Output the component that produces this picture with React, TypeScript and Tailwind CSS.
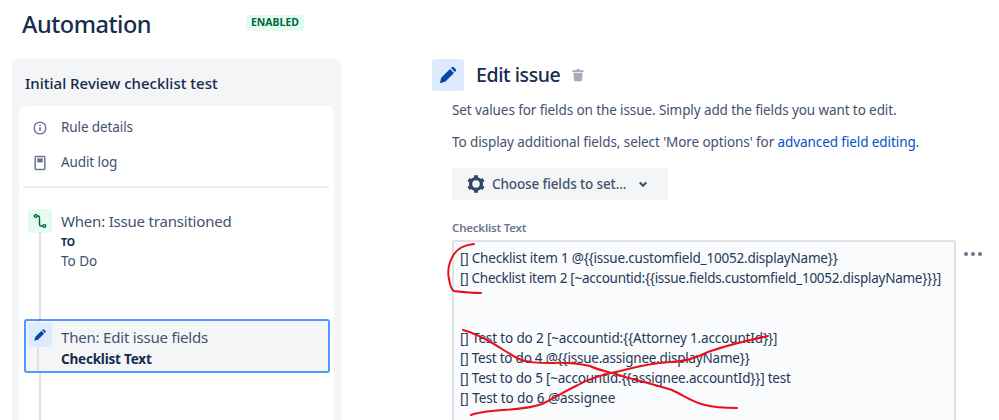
const font = "font-['Noto_Sans','Open_Sans',sans-serif]";

function Pencil({ className }: { className: string }) {
  return (
    <svg viewBox="0 0 24 24" className={className} fill="currentColor">
      <path d="M2.2 21.8l1.6-6.4L14.4 4.8l4.8 4.8L8.6 20.2z" />
      <path d="M15.6 3.6l.9-.9a1.8 1.8 0 0 1 2.5 0l2.3 2.3a1.8 1.8 0 0 1 0 2.5l-.9.9z" />
    </svg>
  );
}

const lines = [
  { text: "[] Checklist item 1 @{{issue.customfield_10052.displayName}}", cls: "tracking-[-0.2px]" },
  { text: "[] Checklist item 2 [~accountid:{{issue.fields.customfield_10052.displayName}}}]", cls: "tracking-[-0.27px]" },
  { text: "\u00a0", cls: "" },
  { text: "\u00a0", cls: "" },
  { text: "[] Test to do 2 [~accountid:{{Attorney 1.accountId}}]", cls: "tracking-[-0.14px]" },
  { text: "[] Test to do 4 @{{issue.assignee.displayName}}", cls: "tracking-[-0.22px]" },
  { text: "[] Test to do 5 [~accountid:{{assignee.accountId}}] test", cls: "tracking-[-0.2px]" },
  { text: "[] Test to do 6 @assignee", cls: "tracking-[-0.08px]" },
];

export default function App() {
  return (
    <div className={`relative h-[420px] w-[999px] overflow-hidden bg-white text-[#253858] ${font}`}>
      <div className="flex h-full">
        <div className="flex w-[420px] shrink-0 flex-col pl-3">
          <div className="flex h-[59px] shrink-0 items-start">
            <h1 className="ml-[10px] mt-[7px] w-[224px] text-[23.5px] leading-[34px] font-medium tracking-[-0.45px] text-[#172b4d]">Automation</h1>
            <span className="mt-[15px] flex h-4 w-[58px] items-center justify-center rounded-[3px] bg-[#e3fcef] text-[10.5px] font-bold text-[#006644]">ENABLED</span>
          </div>
          <div className="flex min-h-0 w-[329px] flex-1 flex-col rounded-t-md bg-[#f4f5f7] px-[7px]">
            <div className="flex h-[47px] shrink-0 items-center pl-[6px] pt-[1px] text-[15px] font-medium text-[#172b4d]">Initial Review checklist test</div>
            <div className="flex min-h-0 flex-1 flex-col rounded-t-md bg-white px-1">
              <div className="mt-[4px] flex h-[35px] items-center gap-[14px] pl-[10px] text-[13.5px] tracking-[-0.1px] text-[#42526e]">
                <svg viewBox="0 0 16 16" className="h-[14px] w-[14px] text-[#6b778c]" fill="none" stroke="currentColor" strokeWidth="1.6">
                  <circle cx="8" cy="8" r="6.7" />
                  <path d="M8 7.2v4" strokeWidth="2" />
                  <circle cx="8" cy="4.9" r="1" fill="currentColor" stroke="none" />
                </svg>
                <span>Rule details</span>
              </div>
              <div className="flex h-[35px] items-center gap-[14px] pl-[10px] text-[13.5px] tracking-[-0.1px] text-[#42526e]">
                <svg viewBox="0 0 14 16" className="h-4 w-[14px] text-[#6b778c]" fill="none" stroke="currentColor" strokeWidth="1.5">
                  <rect x="2.2" y="1.4" width="9.6" height="13" rx="0.8" />
                  <rect x="4.2" y="3.4" width="5.6" height="4" fill="currentColor" stroke="none" />
                </svg>
                <span>Audit log</span>
              </div>
              <div className="mt-[6px] h-0.5 w-[306px] bg-[#ebecf0]" />
              <div className="relative flex-1">
                <div className="absolute left-[16px] top-[21px] bottom-0 w-0.5 bg-[#dfe1e6]" />
                <div className="relative flex h-[109px] items-start gap-[9px] pl-[5px] pt-[21px]">
                  <div className="relative flex h-6 w-6 shrink-0 items-center justify-center rounded-[3px] bg-[#e3fcef]">
                    <svg viewBox="0 0 16 16" className="h-4 w-4 text-[#006644]" fill="none" stroke="currentColor" strokeWidth="1.4">
                      <circle cx="3.7" cy="3" r="1.4" />
                      <circle cx="12.3" cy="13" r="1.4" />
                      <path d="M5.1 3H6a1.5 1.5 0 0 1 1.5 1.5v7A1.5 1.5 0 0 0 9 13h1.9" />
                    </svg>
                  </div>
                  <div className="flex flex-col text-[#42526e]">
                    <span className="text-[15px] leading-[24px] tracking-[-0.2px]">When: Issue transitioned</span>
                    <span className="mt-[1px] text-[10.5px] font-bold leading-[16px] text-[#172b4d]">TO</span>
                    <span className="mt-[1px] text-[13.5px] leading-[20px]">To Do</span>
                  </div>
                </div>
                <div className="relative ml-[1px] mt-[22px] flex h-[54px] w-[306px] items-start gap-[9px] rounded-[3px] border-2 border-[#4c9aff] bg-[#f4f5f7] pl-[2px] pt-[2px]">
                  <div className="absolute left-[11px] top-0 bottom-0 w-0.5 bg-[#dfe1e6]" />
                  <div className="relative flex h-6 w-6 shrink-0 items-center justify-center rounded-[3px] bg-[#deebff]">
                    <Pencil className="h-[14px] w-[14px] text-[#0747a6]" />
                  </div>
                  <div className="flex flex-col">
                    <span className="mt-[2px] text-[15px] leading-[24px] tracking-[-0.2px] text-[#42526e]">Then: Edit issue fields</span>
                    <span className="text-[13.5px] font-bold leading-[20px] tracking-[-0.2px] text-[#172b4d]">Checklist Text</span>
                  </div>
                </div>
              </div>
            </div>
          </div>
        </div>
        <div className="flex min-w-0 flex-1 flex-col pl-[12px] pt-[59px]">
          <div className="flex h-8 items-center">
            <div className="flex h-8 w-8 items-center justify-center rounded-[3px] bg-[#deebff]">
              <Pencil className="h-5 w-5 text-[#0747a6]" />
            </div>
            <span className="ml-3 text-[19.5px] font-medium tracking-[-0.4px] text-[#172b4d]">Edit issue</span>
            <svg viewBox="0 0 16 16" className="ml-[10px] h-4 w-4 text-[#a5adba]" fill="currentColor">
              <path d="M2.4 3.2h3.8L6.9 2h2.2l.7 1.2h3.8v1.7H2.4zM3.4 5.8h9.2l-.7 7.6a1 1 0 0 1-1 .9H5.1a1 1 0 0 1-1-.9z" />
            </svg>
          </div>
          <div className="ml-5 mt-[9px] text-[13.5px] leading-[20px] tracking-[-0.1px] text-[#42526e]">Set values for fields on the issue. Simply add the fields you want to edit.</div>
          <div className="ml-5 mt-3 text-[13.5px] leading-[20px] tracking-[-0.09px] text-[#42526e]">
            To display additional fields, select 'More options' for <span className="text-[#0052cc]">advanced field editing</span>.
          </div>
          <div className="ml-5 mt-4 flex h-8 w-[216px] items-center rounded-[3px] bg-[#f4f5f7] pl-[14px] text-[13.5px] font-medium tracking-[-0.12px] text-[#42526e]">
            <svg viewBox="0 0 24 24" className="h-5 w-5 text-[#344563]" fill="none" stroke="currentColor" strokeWidth="4">
              <circle cx="12" cy="12" r="6.5" />
              <path d="M12 1.5v4M12 18.5v4M2.9 6.7l3.5 2M17.6 15.3l3.5 2M2.9 17.3l3.5-2M17.6 8.7l3.5-2" strokeWidth="4.5" />
            </svg>
            <span className="ml-[6px]">Choose fields to set...</span>
            <svg viewBox="0 0 12 12" className="ml-[11px] h-3 w-3" fill="none" stroke="currentColor" strokeWidth="2.2">
              <path d="M2.8 4.5 6 7.7 9.2 4.5" />
            </svg>
          </div>
          <div className="ml-5 mt-[20px] text-[11.5px] font-semibold leading-[16px] tracking-[-0.2px] text-[#6b778c]">Checklist Text</div>
          <div className="relative ml-5 mt-[4px] flex min-h-0 flex-1">
            <div className="w-[504px] rounded-t-[3px] border-2 border-b-0 border-[#dfe1e6] bg-[#fafbfc] pl-[6px] pt-[6px] text-[13.5px] leading-[20px] text-[#253858]">
              {lines.map((l, i) => (
                <div key={i} className={`whitespace-nowrap ${l.cls}`}>{l.text}</div>
              ))}
            </div>
            <div className="ml-[8px] mt-[12px] flex h-2 gap-[3px]">
              <span className="h-1 w-1 rounded-full bg-[#6b778c]" />
              <span className="h-1 w-1 rounded-full bg-[#6b778c]" />
              <span className="h-1 w-1 rounded-full bg-[#6b778c]" />
            </div>
          </div>
        </div>
      </div>
      <svg viewBox="0 0 999 420" className="pointer-events-none absolute inset-0 h-[420px] w-[999px]" fill="none" stroke="#e8101a" strokeWidth="2" strokeLinecap="round" strokeLinejoin="round">
        <path d="M474 244C464 245 458 248 454 254C449 262 447 270 449 279C450 285 451 290 454 291C462 292 472 293 481 293" />
        <path d="M463 330C472 332 478 336 487 340C498 346 506 352 517 358C526 363 540 363 552 363C568 362 580 364 590 366C600 371 612 372 625 377C640 381 656 385 672 390C685 396 692 402 705 405C716 408 727 408 737 408" />
        <path d="M471 415C478 412 490 411 503 410C520 409 532 408 542 404C553 399 565 391 578 385C590 378 605 374 620 371C635 367 650 363 670 362C685 362 698 357 708 352C722 347 745 341 768 336" />
      </svg>
    </div>
  );
}
